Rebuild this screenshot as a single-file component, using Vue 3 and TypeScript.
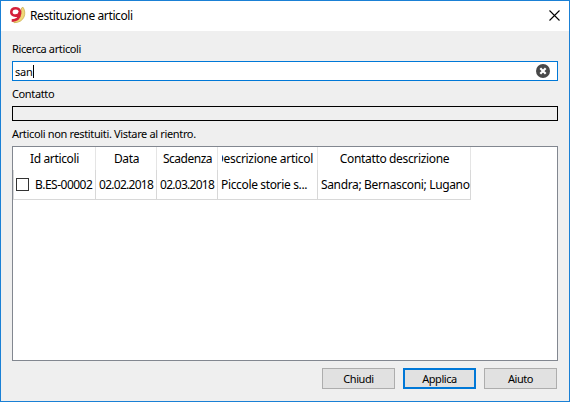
<script setup lang="ts">
import { ref } from 'vue'

interface Article {
  id: string
  date: string
  due: string
  description: string
  contact: string
  returned: boolean
}

const query = ref('san')
const headers = ['Id articoli', 'Data', 'Scadenza', 'Descrizione articolo', 'Contatto descrizione']
const articles = ref<Article[]>([
  {
    id: 'B.ES-00002',
    date: '02.02.2018',
    due: '02.03.2018',
    description: 'Piccole storie s...',
    contact: 'Sandra; Bernasconi; Lugano',
    returned: false,
  },
])
</script>

<template>
  <div class="window">
    <header class="titlebar">
      <svg class="logo" width="18" height="18" viewBox="0 0 18 18">
        <path d="M12.500 2 L14 1.200 C18 7 15.500 16.700 5 16.700 L4 14.500 C10 14.500 13 9 12.500 2 Z" fill="#f0d878" stroke="#c9a84c" stroke-width=".7" />
        <path d="M10.800 6.200 C10.400 8.600 8.600 9.600 6.400 9.600 C3.800 9.600 2.200 8.200 2.300 6 C2.400 3.700 4.300 2.300 6.800 2.300 C9.900 2.300 11.300 4.200 11 7.400 C10.600 11.800 7.600 14.500 2.700 14.600" fill="none" stroke="#d4203a" stroke-width="2.600" />
      </svg>
      <span class="title">Restituzione articoli</span>
      <svg class="close" width="11" height="11" viewBox="0 0 11 11">
        <path d="M.5 .5 L10.500 10.500 M10.500 .5 L.5 10.500" stroke="#000" stroke-width="1.100" />
      </svg>
    </header>

    <main class="content">
      <div class="label first">Ricerca articoli</div>
      <div class="search">
        <span class="query">{{ query }}</span><span class="caret"></span>
        <svg class="clear" width="14" height="14" viewBox="0 0 14 14">
          <circle cx="7" cy="7" r="7" fill="#484848" />
          <path d="M4.300 4.300 L9.700 9.700 M9.700 4.300 L4.300 9.700" stroke="#fff" stroke-width="2.200" />
        </svg>
      </div>
      <div class="label second">Contatto</div>
      <div class="contact"></div>
      <div class="label third">Articoli non restituiti. Vistare al rientro.</div>

      <div class="table">
        <div class="row head">
          <div v-for="(h, i) in headers" :key="h" class="cell" :class="'h' + i"><span>{{ h }}</span></div>
        </div>
        <div v-for="a in articles" :key="a.id" class="row data">
          <div class="cell id"><i class="check"></i><span>{{ a.id }}</span></div>
          <div class="cell date">{{ a.date }}</div>
          <div class="cell date">{{ a.due }}</div>
          <div class="cell desc">{{ a.description }}</div>
          <div class="cell who">{{ a.contact }}</div>
        </div>
      </div>

      <footer class="buttons">
        <button class="btn">Chiudi</button>
        <button class="btn primary">Applica</button>
        <button class="btn">Aiuto</button>
      </footer>
    </main>
  </div>
</template>

<style>
body {
  margin: 0;
}
</style>

<style scoped>
.window {
  box-sizing: border-box;
  width: 570px;
  height: 402px;
  border: 1px solid #1a80d5;
  background: #efefef;
  color: #000;
  font: 12px/16px "Noto Sans", "Open Sans", sans-serif;
  overflow: hidden;
  white-space: nowrap;
}
.titlebar {
  display: flex;
  align-items: center;
  height: 30px;
  box-sizing: border-box;
  padding: 0 8px 2px;
  background: #fff;
}
.title {
  margin: 2px 0 0 3px;
  flex: 1;
  letter-spacing: -0.38px;
}
.close {
  margin-right: 1px;
}
.content {
  padding: 0 11px;
}
.label {
  box-sizing: border-box;
  font-size: 11px;
  line-height: 14px;
  letter-spacing: -0.37px;
}
.first {
  height: 30px;
  padding-top: 11px;
}
.second {
  height: 25px;
  padding-top: 6px;
}
.third {
  height: 25px;
  padding-top: 6px;
  letter-spacing: -0.35px;
}
.search {
  display: flex;
  align-items: center;
  box-sizing: border-box;
  height: 20px;
  padding: 0 7px 0 2px;
  border: 1px solid #0078d7;
  background: #fff;
  font-size: 11px;
}
.query {
  line-height: 16px;
  padding-top: 2px;
  letter-spacing: -0.2px;
}
.caret {
  width: 1px;
  height: 13px;
  background: #000;
}
.clear {
  margin-left: auto;
}
.contact {
  box-sizing: border-box;
  height: 15px;
  border: 1px solid #000;
}
.table {
  box-sizing: border-box;
  height: 215px;
  border: 1px solid #828790;
  background: #fff;
}
.row {
  display: grid;
  grid-template-columns: 83px 61px 61px 100px 153px;
  width: 458px;
}
.cell {
  display: flex;
  align-items: center;
  box-sizing: border-box;
  min-width: 0;
  overflow: hidden;
  border-right: 1px solid #d8d8d8;
  letter-spacing: -0.35px;
}
.head {
  height: 23px;
}
.head .cell {
  justify-content: center;
  padding: 1px 3px 0 4px;
  border-color: #e5e5e5;
}
.head .h2 {
  letter-spacing: -0.5px;
}
.head .h3 {
  justify-content: flex-start;
}
.head .h3 span {
  display: flex;
  justify-content: center;
  width: 91px;
  overflow: hidden;
  letter-spacing: -0.3px;
}
.data {
  height: 30px;
}
.data .cell {
  padding: 1px 0 0 3px;
  border-bottom: 1px solid #d8d8d8;
}
.data .id {
  padding-left: 2px;
  border-left: 1px solid #d8d8d8;
}
.data .id {
  letter-spacing: -0.5px;
}
.data .date {
  letter-spacing: -0.72px;
}
.check {
  flex: none;
  box-sizing: border-box;
  width: 13px;
  height: 13px;
  margin: 0 6px 1px 0;
  border: 1px solid #333;
  background: #fff;
}
.buttons {
  display: flex;
  justify-content: flex-end;
  gap: 8px;
  padding: 7px 1px 0 0;
}
.btn {
  box-sizing: border-box;
  width: 73px;
  height: 21px;
  padding: 0;
  border: 1px solid #adadad;
  border-radius: 0;
  background: #e1e1e1;
  color: #000;
  font: 11px/17px "Noto Sans", "Open Sans", sans-serif;
  letter-spacing: -0.45px;
}
.primary {
  border: 2px solid #0078d7;
}
</style>
